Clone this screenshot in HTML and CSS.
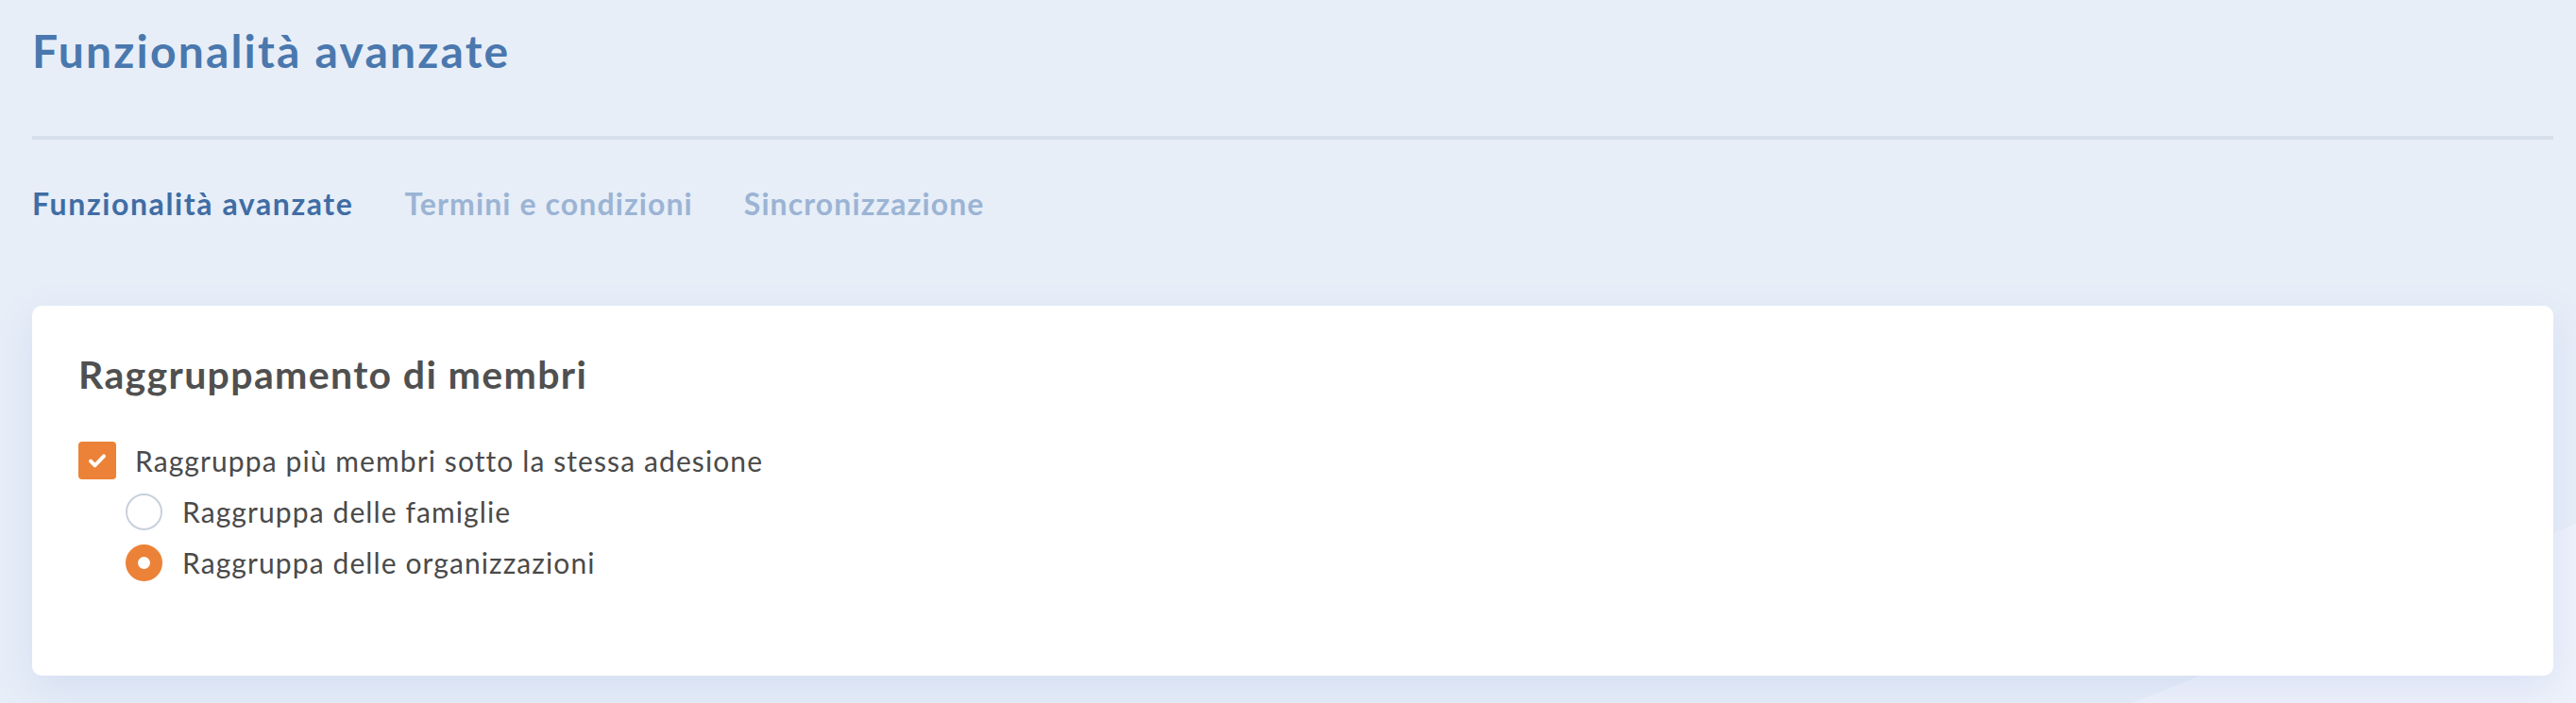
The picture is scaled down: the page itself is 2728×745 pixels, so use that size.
FILE: index.html
```html
<!DOCTYPE html>
<html lang="it">
<head>
<meta charset="utf-8">
<title>Funzionalità avanzate</title>
<link rel="stylesheet" href="styles.css">
</head>
<body>
<div class="backdrop"></div>
<main class="page">
  <h1 class="title">Funzionalità avanzate</h1>
  <hr class="divider">
  <nav class="tabs">
    <a class="tab active">Funzionalità avanzate</a>
    <a class="tab">Termini e condizioni</a>
    <a class="tab">Sincronizzazione</a>
  </nav>
  <section class="card">
    <h2 class="card-title">Raggruppamento di membri</h2>
    <label class="row check-row">
      <span class="checkbox">
        <svg viewBox="0 0 24 24" width="28" height="28"><path d="M6 12.6l3.9 3.9L18 8" fill="none" stroke="#fff" stroke-width="3.4" stroke-linecap="round" stroke-linejoin="round"/></svg>
      </span>
      <span class="label">Raggruppa più membri sotto la stessa adesione</span>
    </label>
    <div class="radios">
      <label class="row radio-row">
        <span class="radio"></span>
        <span class="label">Raggruppa delle famiglie</span>
      </label>
      <label class="row radio-row">
        <span class="radio checked"></span>
        <span class="label">Raggruppa delle organizzazioni</span>
      </label>
    </div>
  </section>
</main>
</body>
</html>
```
FILE: styles.css
```css
html, body {
  margin: 0;
  padding: 0;
}
body {
  background: #e7eef8;
  font-family: Lato, "Open Sans", sans-serif;
  min-height: 745px;
  position: relative;
  overflow: hidden;
}
.backdrop {
  position: absolute;
  left: 0;
  top: 0;
  width: 2728px;
  height: 745px;
  background: #eef2fb;
  clip-path: polygon(2258px 745px, 2728px 555px, 2728px 745px);
  z-index: 0;
}
.page {
  position: relative;
  z-index: 1;
  padding: 24px 24px 0 34px;
}
.title {
  margin: 0;
  font-size: 48px;
  line-height: 60px;
  font-weight: 700;
  letter-spacing: 2.2px;
  color: #4a78ae;
}
.divider {
  margin: 60px 0 0 0;
  border: 0;
  height: 4px;
  background: #d6dfea;
}
.tabs {
  display: flex;
  gap: 54px;
  margin-top: 48px;
}
.tab {
  font-size: 32px;
  line-height: 40px;
  font-weight: 700;
  letter-spacing: 1.1px;
  color: #9bb4d4;
}
.tab.active {
  letter-spacing: 1.6px;
  color: #3f6da4;
}
.card {
  margin-top: 88px;
  background: #ffffff;
  border-radius: 10px;
  padding: 48px 49px 100px 49px;
  box-shadow: 0 14px 40px rgba(120, 145, 210, 0.16);
}
.card-title {
  margin: 0;
  font-size: 41px;
  line-height: 50px;
  font-weight: 700;
  letter-spacing: 1.35px;
  color: #505050;
}
.row {
  display: flex;
  align-items: center;
  height: 40px;
}
.check-row {
  margin-top: 46px;
  gap: 20px;
}
.label {
  font-size: 30px;
  line-height: 40px;
  letter-spacing: 1.1px;
  color: #4a4a4a;
}
.checkbox {
  width: 40px;
  height: 40px;
  border-radius: 4px;
  background: #ec8237;
  display: flex;
  align-items: center;
  justify-content: center;
}
.radios {
  display: flex;
  flex-direction: column;
  gap: 14px;
  margin-top: 14px;
  padding-left: 50px;
}
.radio-row {
  gap: 21px;
}
.radio {
  box-sizing: border-box;
  width: 39px;
  height: 39px;
  border-radius: 50%;
  border: 2px solid #c9d0dc;
  background: #fff;
}
.radio.checked {
  border: 13px solid #ec8237;
}
```
